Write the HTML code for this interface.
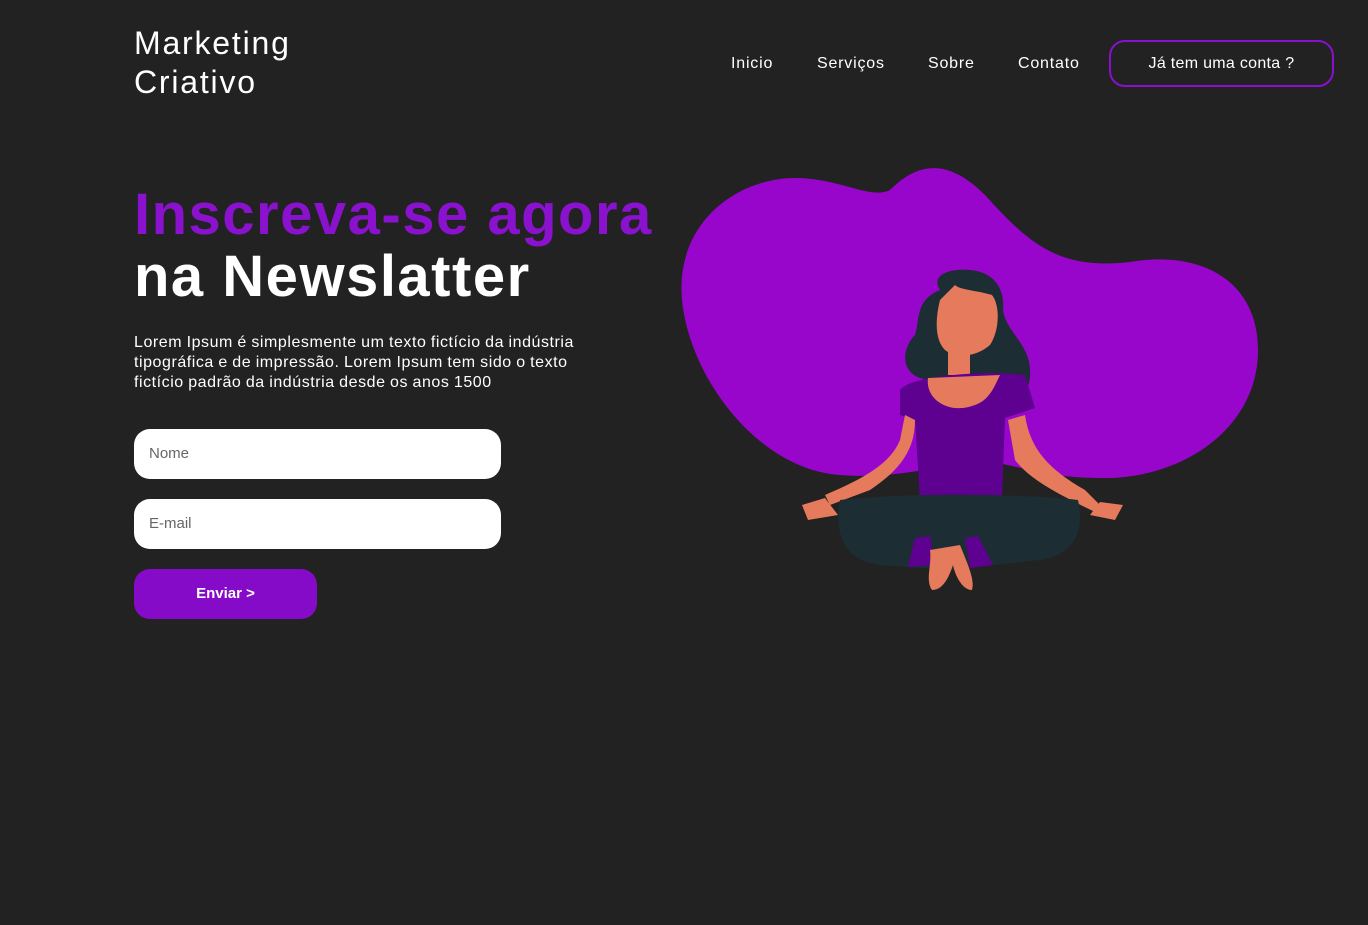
<!DOCTYPE html>
<html><head><meta charset="utf-8"><style>
*{margin:0;padding:0;box-sizing:border-box}
body{width:1368px;height:925px;background:#222;font-family:"Liberation Sans",sans-serif;color:#fff;position:relative;overflow:hidden}
.logo{position:absolute;left:134px;top:24px;font-size:32px;line-height:39px;letter-spacing:1.8px}
.nav{position:absolute;top:55px;font-size:16px;letter-spacing:0.8px}
.btn{position:absolute;left:1109px;top:40px;width:225px;height:47px;border:2px solid #8a0fd0;border-radius:16px;font-size:16px;text-align:center;line-height:43px;letter-spacing:0.3px}
h1{position:absolute;left:134px;top:184px;font-size:58px;line-height:62px;font-weight:bold;letter-spacing:1.5px;white-space:nowrap}
h1 .p{color:#8a12cf}
.txt{position:absolute;left:134px;top:333px;font-size:16px;line-height:20px;width:480px;letter-spacing:0.55px;word-spacing:-0.5px}
.in{position:absolute;left:134px;width:367px;height:50px;background:#fff;border-radius:16px;color:#666;font-size:15px;padding-left:15px;line-height:50px}
.send{position:absolute;left:134px;top:569px;width:183px;height:50px;background:#860bc9;border-radius:16px;font-weight:bold;font-size:15px;text-align:center;line-height:50px}
svg{position:absolute;left:0;top:0}
</style></head><body>
<div class="logo">Marketing<br>Criativo</div>
<div class="nav" style="left:731px">Inicio</div>
<div class="nav" style="left:817px">Serviços</div>
<div class="nav" style="left:928px">Sobre</div>
<div class="nav" style="left:1018px">Contato</div>
<div class="btn">Já tem uma conta ?</div>
<h1><span class="p">Inscreva-se agora</span><br>na Newslatter</h1>
<div class="txt">Lorem Ipsum é simplesmente um texto fictício da indústria tipográfica e de impressão. Lorem Ipsum tem sido o texto fictício padrão da indústria desde os anos 1500</div>
<div class="in" style="top:429px">Nome</div>
<div class="in" style="top:499px">E-mail</div>
<div class="send">Enviar &gt;</div>
<svg width="1368" height="925" viewBox="0 0 1368 925">
<path d="M795 178 C840 178 870 200 890 190 C920 160 950 160 985 195 C1030 245 1060 270 1130 262 C1200 250 1258 280 1258 350 C1258 430 1180 480 1100 478 C1040 478 1010 462 985 462 C950 462 900 480 840 475 C760 470 690 380 682 300 C675 220 740 178 795 178 Z" fill="#9806cc"/>
<path d="M940 290 C930 275 950 268 970 270 C995 272 1005 290 1003 310 C1005 330 1030 345 1030 370 C1032 395 1015 400 1000 390 L930 380 C900 378 900 350 915 335 C920 320 915 300 940 290 Z" fill="#1c2d33"/>
<path d="M940 300 C935 320 935 340 945 350 C955 358 975 358 990 345 C1000 330 1000 305 992 295 C975 290 960 290 955 285 C950 290 945 295 940 300 Z" fill="#e57b5c"/>
<rect x="948" y="345" width="22" height="30" fill="#e57b5c"/>
<path d="M900 390 C910 375 990 370 1025 375 L1035 408 L1005 418 L1002 497 L920 500 L915 420 L900 415 Z" fill="#5e0090"/>
<path d="M928 378 C925 400 950 415 975 405 C990 400 995 385 1000 375 Z" fill="#e57b5c"/>
<path d="M905 415 L915 420 C915 450 900 470 870 490 L830 505 L825 495 C860 480 890 465 900 440 Z" fill="#e57b5c"/>
<path d="M1008 420 L1025 415 C1030 450 1050 470 1085 490 L1100 505 L1095 512 C1060 495 1030 480 1015 460 Z" fill="#e57b5c"/>
<path d="M802 505 L825 498 L838 515 L808 520 Z" fill="#e57b5c"/>
<path d="M1100 502 L1123 505 L1115 520 L1090 515 Z" fill="#e57b5c"/>
<path d="M840 500 C900 493 1020 493 1078 500 C1085 530 1075 555 1040 560 L950 570 L880 565 C840 560 835 530 840 500 Z" fill="#1c2d33"/>
<path d="M915 538 L930 536 L935 565 L908 567 Z M965 538 L978 536 L993 565 L970 568 Z" fill="#5e0090"/>
<path d="M930 550 L960 545 C968 565 975 580 972 590 C962 590 955 575 953 565 C948 580 942 590 932 590 C925 580 932 565 930 550 Z" fill="#e57b5c"/>
</svg>
</body></html>
